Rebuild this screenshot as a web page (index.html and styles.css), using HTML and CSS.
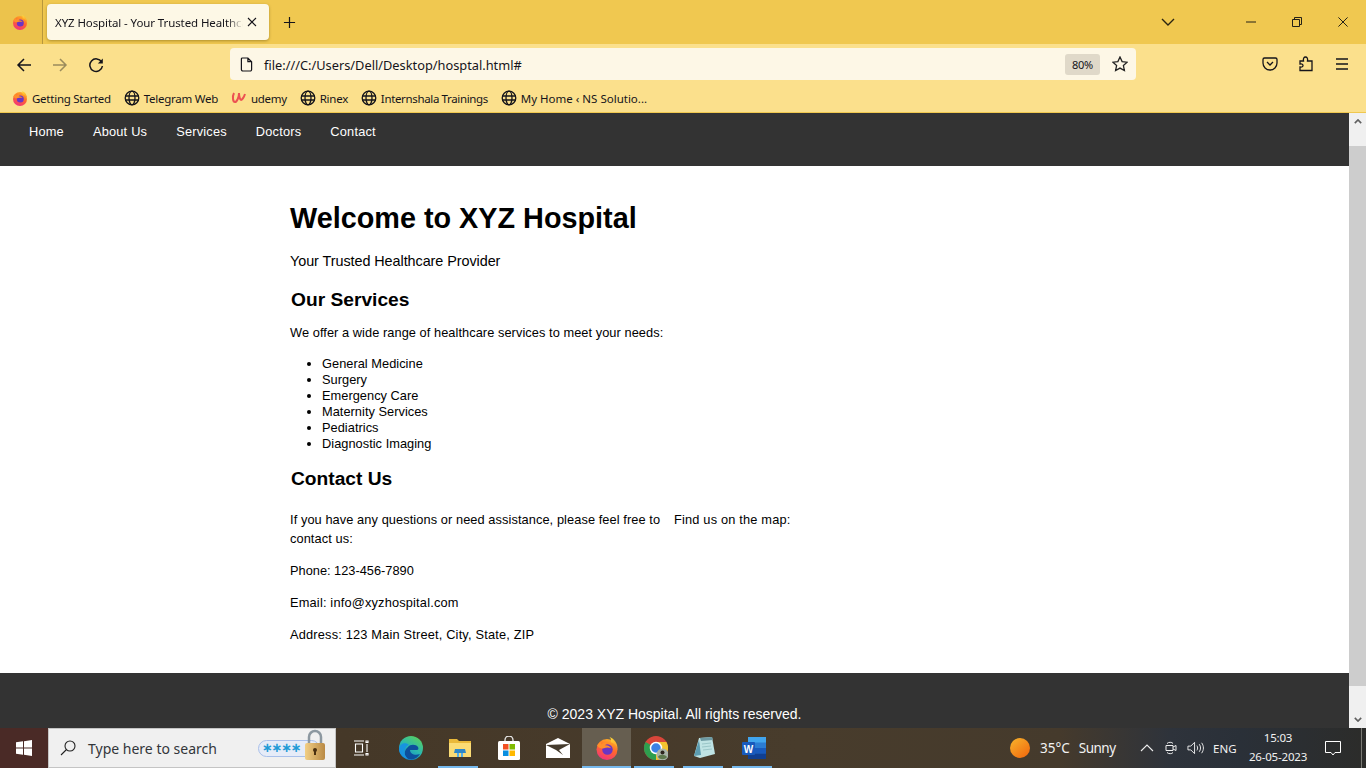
FILE: index.html
```html
<!DOCTYPE html>
<html lang="en">
<head>
<meta charset="utf-8">
<title>XYZ Hospital - Your Trusted Healthcare Provider</title>
<link rel="stylesheet" href="styles.css">
</head>
<body>
<svg class="defs" width="0" height="0" aria-hidden="true">
  <defs>
    <linearGradient id="ffg" x1="0.7" y1="0" x2="0.3" y2="1"><stop offset="0" stop-color="#ffb326"/><stop offset="0.45" stop-color="#ff6a2b"/><stop offset="1" stop-color="#f2307f"/></linearGradient>
    <linearGradient id="ffy" x1="0.3" y1="0" x2="0.7" y2="1"><stop offset="0" stop-color="#ffd83a"/><stop offset="1" stop-color="#ff9a26"/></linearGradient>
    <linearGradient id="edgeg" x1="0.8" y1="0" x2="0.2" y2="1"><stop offset="0" stop-color="#5ad05c"/><stop offset="0.5" stop-color="#2ab8b0"/><stop offset="1" stop-color="#0f78d0"/></linearGradient>
    <linearGradient id="lockg" x1="0" y1="0" x2="1" y2="0"><stop offset="0" stop-color="#f2cf85"/><stop offset="1" stop-color="#b98a45"/></linearGradient>
    <symbol id="firefox" viewBox="0 0 16 16">
      <circle cx="8" cy="9" r="7" fill="url(#ffg)"/>
      <path d="M9.500 .5c3.500 1.500 5.800 4.500 5.500 8.500-.6-2.600-2.500-4.400-4.600-4.800.6-1.200.4-2.600-.9-3.700z" fill="url(#ffy)"/>
      <circle cx="8.300" cy="9" r="3.500" fill="#6a35c4"/>
      <path d="M1.400 6.500C2 5 3 4.300 4 4c-.2.700 0 1.200.5 1.500 1-1.200 3-1.800 5-1-1.500.2-2.500.8-2.800 1.700 1.800-.1 3.300.6 4 2-1.500-.8-3.300-.6-4.700-.1-1.600.5-3.300.2-4.600-1.600z" fill="#ff8f2b"/>
    </symbol>
    <symbol id="globe" viewBox="0 0 16 16">
      <g fill="none" stroke="#15141a" stroke-width="1.300"><circle cx="8" cy="8" r="6.800"/><ellipse cx="8" cy="8" rx="3" ry="6.800"/><path d="M1.200 6h13.600M1.200 10h13.600"/></g>
    </symbol>
  </defs>
</svg>
<div class="screen">
  <header class="titlebar">
    <div class="ffcell"><svg class="ic16"><use href="#firefox"/></svg></div>
    <div class="tab">
      <span class="tabtitle">XYZ Hospital - Your Trusted Healthcare Provider</span>
      <svg class="tabclose" viewBox="0 0 10 10"><path d="M1 1l8 8M9 1l-8 8"/></svg>
    </div>
    <svg class="newtab" viewBox="0 0 14 14"><path d="M7 1v12M1 7h12"/></svg>
    <div class="spacer"></div>
    <svg class="tablist" viewBox="0 0 14 8"><path d="M1 1l6 6 6-6"/></svg>
    <div class="winctl">
      <svg viewBox="0 0 12 12"><path d="M0 6h12"/></svg>
      <svg viewBox="0 0 12 12"><path d="M.6 3h8.400v8.400H.6zM3 3V.6h8.400V9H9"/></svg>
      <svg viewBox="0 0 12 12"><path d="M.5 .5l11 11M11.500 .5l-11 11"/></svg>
    </div>
  </header>

  <div class="toolbar">
    <svg class="navic" viewBox="0 0 16 16"><path d="M15 8H2M8 2L2 8l6 6"/></svg>
    <svg class="navic dim" viewBox="0 0 16 16"><path d="M1 8h13M8 2l6 6-6 6"/></svg>
    <svg class="navic" viewBox="0 0 16 16"><path d="M13.600 5A6.300 6.300 0 1 0 14.400 9"/><path class="solid" d="M14.800 1.600v5h-5z"/></svg>
    <div class="urlbar">
      <svg class="pageic" viewBox="0 0 14 16"><path d="M2.500 1h6l4 4v8.500a1.500 1.500 0 0 1-1.500 1.500H3a1.500 1.500 0 0 1-1.500-1.500V2A1 1 0 0 1 2.500 1zM8.500 1v4h4"/></svg>
      <span class="url">file:///C:/Users/Dell/Desktop/hosptal.html#</span>
      <span class="zoomchip">80%</span>
      <svg class="star" viewBox="0 0 16 16"><path d="M8 1l2.100 4.600 5 .6-3.700 3.400 1 5L8 12.100 3.600 14.600l1-5L.9 6.200l5-.6z"/></svg>
    </div>
    <div class="tools">
      <svg viewBox="0 0 16 16"><path d="M2.500 2h11A1.500 1.500 0 0 1 15 3.500V7a7 7 0 0 1-14 0V3.500A1.500 1.500 0 0 1 2.500 2zM5 6l3 3 3-3"/></svg>
      <svg viewBox="0 0 16 16"><path d="M2 5h3.500C5 2.500 6 1 7.500 1S10 2.500 9.500 5H14v9.500H2v-3.500c2 .5 3-.5 3-1.500S4 7.500 2 8z"/></svg>
      <svg viewBox="0 0 16 16"><path d="M2 3h12M2 8h12M2 13h12"/></svg>
    </div>
  </div>

  <nav class="bookmarks">
    <a class="bm"><svg class="ic16"><use href="#firefox"/></svg>Getting Started</a>
    <a class="bm"><svg class="ic16"><use href="#globe"/></svg>Telegram Web</a>
    <a class="bm"><svg class="ic16" viewBox="0 0 16 16"><path class="udemy" d="M3 3c-2 4-1 9 1 9s4-5 4-9c0 3 1 7 2 7s3-3 4-6"/></svg>udemy</a>
    <a class="bm"><svg class="ic16"><use href="#globe"/></svg>Rinex</a>
    <a class="bm bm-narrow"><svg class="ic16"><use href="#globe"/></svg>Internshala Trainings</a>
    <a class="bm bm-wide"><svg class="ic16"><use href="#globe"/></svg>My Home ‹ NS Solutio...</a>
  </nav>

  <div class="viewport">
    <div class="page">
      <div class="sitenav">
        <a>Home</a><a>About Us</a><a>Services</a><a>Doctors</a><a>Contact</a>
      </div>
      <main class="content">
        <h1>Welcome to XYZ Hospital</h1>
        <p class="lead">Your Trusted Healthcare Provider</p>
        <h2>Our Services</h2>
        <p class="intro">We offer a wide range of healthcare services to meet your needs:</p>
        <ul>
          <li>General Medicine</li>
          <li>Surgery</li>
          <li>Emergency Care</li>
          <li>Maternity Services</li>
          <li>Pediatrics</li>
          <li>Diagnostic Imaging</li>
        </ul>
        <h2 class="contact-h">Contact Us</h2>
        <div class="contact">
          <div class="contact-left">
            <p class="ask">If you have any questions or need assistance, please feel free to contact us:</p>
            <p>Phone: 123-456-7890</p>
            <p class="wide">Email: info@xyzhospital.com</p>
            <p class="wide">Address: 123 Main Street, City, State, ZIP</p>
          </div>
          <div class="contact-right"><p class="wide">Find us on the map:</p></div>
        </div>
      </main>
      <footer class="sitefoot">© 2023 XYZ Hospital. All rights reserved.</footer>
    </div>
    <div class="scrollbar">
      <div class="sbbtn"><svg viewBox="0 0 10 6"><path d="M1 5l4-4 4 4"/></svg></div>
      <div class="sbthumb"></div>
      <div class="sbbtn"><svg viewBox="0 0 10 6"><path d="M1 1l4 4 4-4"/></svg></div>
    </div>
  </div>

  <footer class="taskbar">
    <div class="start"><svg viewBox="0 0 16 16"><path d="M0 2.300l7-1v6.300H0zM8 1.200L16 0v7.600H8zM0 8.500h7v6.300l-7-1zM8 8.500h8V16l-8-1.200z"/></svg></div>
    <div class="search">
      <svg class="lens" viewBox="0 0 16 16"><circle cx="10" cy="6" r="5"/><path d="M6.500 9.500L1 15"/></svg>
      <span class="searchtext">Type here to search</span>
      <div class="pwd"><span class="dots">∗∗∗∗</span>
        <svg class="padlock" viewBox="0 0 22 32"><path class="shackle" d="M5 16V8a6 6 0 0 1 12 0v8"/><rect class="lockbody" x="1" y="14" width="20" height="17" rx="2"/><circle cx="11" cy="21" r="2" fill="#4a3010"/><rect x="10" y="21" width="2" height="5" fill="#4a3010"/></svg>
      </div>
    </div>
    <div class="tk view"><svg class="tkic" viewBox="0 0 16 16"><path class="wline" d="M1 1h10M1 15h10M2.500 4h7v8h-7zM14 4v8M13 1h2v1.500h-2zM13 13.500h2V15h-2z"/></svg></div>
    <div class="tk"><svg class="tkic big" viewBox="0 0 24 24"><circle cx="12" cy="12" r="12" fill="url(#edgeg)"/><path d="M9 11c2-3 8-3 10 0 1 2 0 3-2 3h-6c0 4 5 6 10 4-3 5-9 7-13 4C4 19 6 13 9 11z" fill="#0d4f9c"/><path d="M0 13C1 7 7 6 10 9c-3 1-5 4-4.500 8 .2 2 1.500 4 3.500 6C4 22 0 18 0 13z" fill="#1893e0"/></svg></div>
    <div class="tk run"><svg class="tkic big" viewBox="0 0 24 24"><path d="M1 3h8l2 2h12v15H1z" fill="#eab93a"/><path d="M1 7h22v14H1z" fill="#fbdc75"/><path d="M7 13h10l1 4H6z" fill="#2f88c8"/><path d="M9 17h2v4H9zM13 17h2v4h-2z" fill="#56b0e8"/></svg></div>
    <div class="tk"><svg class="tkic big" viewBox="0 0 24 24"><path d="M8 6V4a4 4 0 0 1 8 0v2" fill="none" stroke="#e8e8e8" stroke-width="1.300"/><rect x="1" y="5" width="22" height="19" rx="1.500" fill="#fff"/><rect x="6" y="8" width="5.500" height="5.500" fill="#f25022"/><rect x="12.500" y="8" width="5.500" height="5.500" fill="#7fba00"/><rect x="6" y="14.500" width="5.500" height="5.500" fill="#0a8ee0"/><rect x="12.500" y="14.500" width="5.500" height="5.500" fill="#ffb900"/></svg></div>
    <div class="tk"><svg class="tkic big" viewBox="0 0 24 20"><path d="M0 6l12-6 12 6v14H0z" fill="#fff"/><path d="M0 7l24-1-11 6 4 5-7-5z" fill="#453b2d"/></svg></div>
    <div class="tk run active"><svg class="tkic big"><use href="#firefox"/></svg></div>
    <div class="tk run"><svg class="tkic big" viewBox="0 0 24 24"><circle cx="12" cy="12" r="12" fill="#d9463a"/><path d="M12 12L1.600 6A12 12 0 0 0 12 24z" fill="#2e9e4e"/><path d="M12 12V24A12 12 0 0 0 22.400 6H12z" fill="#f4c430"/><circle cx="12" cy="12" r="5.500" fill="#3c82e6" stroke="#fff" stroke-width="1.500"/><circle cx="18.500" cy="18.500" r="6" fill="#aab4a8"/><circle cx="18.500" cy="16.500" r="2" fill="#2c241c"/><path d="M14 21c1-3 7-3 9 0-2 3-7 3-9 0z" fill="#5f7a4e"/></svg></div>
    <div class="tk run"><svg class="tkic big" viewBox="0 0 24 24"><path d="M6 2l13-1 3 17-15 4L1 20z" fill="#bfe3e4"/><path d="M7 2l12-1 1 3-12 1z" fill="#6d9aa3"/><path d="M1 20L6 4l2 15z" fill="#5c9cb0"/><path d="M9 8l9-1M9 11l9-1M10 14l9-1" stroke="#9ac6c8"/></svg></div>
    <div class="tk run"><svg class="tkic big" viewBox="0 0 24 24"><rect x="6" y="1" width="18" height="22" rx="1" fill="#2b7cd3"/><rect x="6" y="1" width="18" height="5.500" fill="#41a5ee"/><rect x="6" y="12" width="18" height="5.500" fill="#185abd"/><rect x="6" y="17.500" width="18" height="5.500" fill="#103f91"/><rect x="0" y="6" width="13" height="13" rx="1" fill="#185abd"/><text x="6.500" y="16.500" class="wordw">W</text></svg></div>
    <div class="spacer"></div>
    <div class="weather"><span class="sun"></span><span class="temp">35°C</span><span class="cond">Sunny</span></div>
    <div class="tray">
      <svg class="chev" viewBox="0 0 14 8"><path d="M1 7l6-6 6 6"/></svg>
      <svg class="meet" viewBox="0 0 12 14"><path d="M1 4.500h7v5H1zM8 6l3-1.500v5L8 8M2 2.500C3.500 .9 7 .9 8 2.500M2 11.500c1.500 1.600 5 1.600 6 0"/></svg>
      <svg class="vol" viewBox="0 0 18 14"><path d="M1 5h3l4-4v12L4 9H1zM10.500 4.500c1 1.500 1 3.500 0 5M13 3c1.800 2.500 1.800 5.500 0 8M15.500 1.500c2.500 3.500 2.500 7.500 0 11"/></svg>
      <span class="lang">ENG</span>
      <div class="clock"><span>15:03</span><span>26-05-2023</span></div>
      <svg class="notif" viewBox="0 0 16 15"><path d="M.5.500h15v11H10l-2 2.500-2-2.500H.5z"/></svg>
      <span class="showdesk"></span>
    </div>
  </footer>
</div>
</body>
</html>
```
FILE: styles.css
```css
* { box-sizing: border-box; }
html, body { margin: 0; padding: 0; height: 100%; overflow: hidden; }
body { font-family: "Liberation Sans", Arial, sans-serif; color: #000; background: #fff; }
.defs { position: absolute; }
.screen { width: 1366px; height: 768px; display: flex; flex-direction: column; overflow: hidden; }
.spacer { flex: 1; }
svg { display: block; flex: none; }
.ic16 { width: 16px; height: 16px; }

.titlebar { height: 44px; background: #f0c850; display: flex; align-items: center; flex: none; }
.ffcell { width: 43px; height: 44px; display: flex; align-items: center; padding-left: 12px; border-right: 1px solid #b8973c; background: #ecc34c; }
.tab { width: 222px; height: 36px; margin-left: 4px; background: #fdf8e6; border-radius: 4px; box-shadow: 0 1px 3px rgba(90,70,0,.45); display: flex; align-items: center; padding-left: 8px; font: 11.500px "Noto Sans", sans-serif; color: #15141a; }
.tabtitle { width: 188px; white-space: nowrap; overflow: hidden; letter-spacing: -.1px; -webkit-mask-image: linear-gradient(to right, #000 172px, transparent 188px); mask-image: linear-gradient(to right, #000 172px, transparent 188px); }
.tabclose { width: 10px; height: 10px; margin-left: 4px; fill: none; stroke: #15141a; stroke-width: 1.100; }
.newtab { width: 13px; height: 13px; margin-left: 14px; fill: none; stroke: #15141a; stroke-width: 1.300; }
.tablist { width: 14px; height: 8px; margin-right: 71px; fill: none; stroke: #2a2410; stroke-width: 1.400; }
.winctl { display: flex; gap: 36px; margin-right: 18px; align-items: center; }
.winctl svg { width: 10px; height: 10px; fill: none; stroke: #111; stroke-width: 1.100; }

.toolbar { height: 40px; background: #fbe08c; display: flex; align-items: center; flex: none; padding-left: 16px; }
.navic { width: 16px; height: 16px; margin: 1px 20px 0 0; fill: none; stroke: #15141a; stroke-width: 1.500; }
.navic.dim { stroke: #9a8b5c; }
.navic .solid { fill: #15141a; stroke: none; }
.urlbar { width: 906px; height: 32px; margin-left: 106px; background: #fdf7e6; border-radius: 4px; display: flex; align-items: center; padding-left: 10px; }
.pageic { width: 13px; height: 15px; fill: none; stroke: #15141a; stroke-width: 1.300; }
.url { margin-left: 11px; padding-top: 1px; font: 12.800px "Noto Sans", sans-serif; color: #15141a; flex: 1; }
.zoomchip { width: 35px; height: 21px; background: #e0d9c9; border-radius: 3px; font: 11px "Noto Sans", sans-serif; color: #15141a; display: flex; align-items: center; justify-content: center; letter-spacing: -.3px; }
.star { width: 16px; height: 16px; margin: 0 8px 0 12px; fill: none; stroke: #222; stroke-width: 1.300; }
.tools { display: flex; margin-left: 126px; gap: 20px; }
.tools svg { width: 16px; height: 16px; fill: none; stroke: #15141a; stroke-width: 1.300; }

.bookmarks { height: 29px; background: #fbe08c; border-bottom: 1px solid #f0c850; display: flex; align-items: center; padding-left: 12px; flex: none; font: 11.500px "Noto Sans", sans-serif; color: #15141a; gap: 12.800px; letter-spacing: -.25px; }
.bm { display: flex; align-items: center; gap: 4px; white-space: nowrap; }
.bm-narrow { letter-spacing: -.35px; }
.bm-wide { letter-spacing: 0; }
.udemy { fill: none; stroke: #ec5252; stroke-width: 2; }

.viewport { flex: 1; min-height: 0; display: flex; }
.page { flex: 1; min-width: 0; display: flex; flex-direction: column; overflow: hidden; }
.sitenav { height: 53px; background: #333; flex: none; padding: 11px 0 0 29px; display: flex; gap: 29px; font-size: 12.800px; line-height: 15px; letter-spacing: .2px; color: #fff; }
.content { height: 507px; flex: none; padding: 0 0 0 290px; background: #fff; }
h1 { font-size: 28.800px; line-height: 33px; margin: 0; padding-top: 36px; height: 71px; }
.lead { font-size: 14.400px; line-height: 17px; margin: 16px 0 0; letter-spacing: -.06px; }
h2 { font-size: 19.200px; line-height: 22px; margin: 19px 0 0; padding-left: 1px; }
.intro { font-size: 12.800px; line-height: 15px; margin: 14px 0 0; letter-spacing: .06px; }
ul { margin: 16px 0 0; padding: 0 0 0 32px; font-size: 12.800px; line-height: 16px; letter-spacing: .03px; }
.contact-h { margin-top: 16px; }
.contact { display: flex; font-size: 12.800px; line-height: 19px; margin-top: 20px; gap: 10px; }
.contact p { margin: 0 0 13px; }
.contact-left { width: 374px; }
.ask { letter-spacing: .08px; }
.wide { letter-spacing: .18px; }
.sitefoot { height: 55px; flex: none; background: #333; color: #fff; font-size: 14px; line-height: 17px; padding-top: 33px; text-align: center; }

.scrollbar { width: 17px; background: #f0f0f0; display: flex; flex-direction: column; flex: none; }
.sbbtn { height: 17px; display: flex; align-items: center; justify-content: center; flex: none; }
.sbbtn svg { width: 8px; height: 5px; fill: none; stroke: #606060; stroke-width: 2; }
.sbthumb { height: 540px; margin-top: 16px; background: #cdcdcd; }
.scrollbar .sbbtn:last-child { margin-top: auto; }

.taskbar { height: 40px; flex: none; display: flex; align-items: center; background: linear-gradient(to right, #4a2a26 0, #4a2a26 48px, #453828 340px, #483c2c 800px, #453a2c 1060px, #2e333b 1170px, #2a3038 1240px, #2c2c2a 1366px); color: #f2f2f2; }
.start { width: 48px; height: 40px; display: flex; align-items: center; justify-content: center; }
.start svg { width: 16px; height: 16px; fill: #fff; }
.search { width: 288px; height: 40px; background: #f0f0f0; border: 1px solid #c4c4c4; display: flex; align-items: center; padding-left: 11px; font: 14px "Noto Sans", sans-serif; }
.lens { width: 16px; height: 16px; fill: none; stroke: #222; stroke-width: 1.100; }
.searchtext { margin-left: 12px; white-space: nowrap; width: 170px; color: #33363a; }
.pwd { position: relative; width: 62px; height: 17px; background: #e6ecf8; border: 1.500px solid #a9c0ea; border-radius: 9px; }
.dots { display: block; font: bold 13px/14px "DejaVu Sans", sans-serif; color: #1f9bd6; letter-spacing: -1.300px; padding-left: 3px; }
.padlock { position: absolute; right: -7px; top: -12px; width: 22px; height: 32px; }
.shackle { fill: none; stroke: #8c98a0; stroke-width: 2.500; }
.lockbody { fill: url(#lockg); }
.tk { width: 49px; height: 40px; display: flex; align-items: center; justify-content: center; flex: none; position: relative; }
.tk.view { width: 50px; }
.tkic { width: 16px; height: 16px; }
.tkic.big { width: 24px; height: 24px; }
.wline { fill: none; stroke: #fff; stroke-width: 1.100; }
.wordw { font: bold 10px "Liberation Sans", sans-serif; fill: #fff; text-anchor: middle; }
.run::after { content: ""; position: absolute; left: 3px; right: 6px; bottom: 0; height: 2px; background: #76b9ed; }
.active { background: #665e50; }
.active::after { left: 0; right: 0; }
.weather { display: flex; align-items: center; font: 13.500px "Noto Sans", sans-serif; width: 130px; }
.sun { width: 20px; height: 20px; border-radius: 50%; background: linear-gradient(140deg, #f8b52c, #f0640c); flex: none; }
.temp { margin-left: 10px; }
.cond { margin-left: 9px; letter-spacing: -.5px; }
.tray { display: flex; align-items: center; width: 226px; }
.chev { width: 14px; height: 8px; fill: none; stroke: #eee; stroke-width: 1.100; }
.meet { width: 12px; height: 14px; margin-left: 11px; fill: none; stroke: #eee; stroke-width: 1; }
.vol { width: 17px; height: 14px; margin-left: 10px; fill: none; stroke: #eee; stroke-width: 1; }
.lang { font: 11.500px "Noto Sans", sans-serif; margin-left: 9px; width: 36px; }
.clock { width: 58px; margin-bottom: 2px; display: flex; flex-direction: column; align-items: center; font: 11.500px/19px "Noto Sans", sans-serif; letter-spacing: -.2px; white-space: nowrap; }
.notif { width: 16px; height: 15px; margin-left: 18px; fill: none; stroke: #fff; stroke-width: 1; }
.showdesk { width: 1px; height: 40px; background: #7a7a74; margin-left: 20px; }
```
